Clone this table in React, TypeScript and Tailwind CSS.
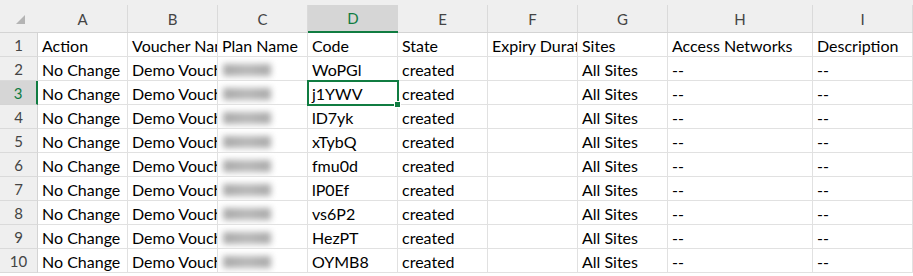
import React from "react";

const cols = [
  { key: "A", w: "w-[90px]" },
  { key: "B", w: "w-[90px]" },
  { key: "C", w: "w-[90px]" },
  { key: "D", w: "w-[90px]" },
  { key: "E", w: "w-[90px]" },
  { key: "F", w: "w-[90px]" },
  { key: "G", w: "w-[90px]" },
  { key: "H", w: "w-[145px]" },
  { key: "I", w: "w-[100px]" },
];

const codes = ["WoPGl", "j1YWV", "lD7yk", "xTybQ", "fmu0d", "lP0Ef", "vs6P2", "HezPT", "OYMB8"];

const header = ["Action", "Voucher Name", "Plan Name", "Code", "State", "Expiry Duration", "Sites", "Access Networks", "Description"];

const rows: string[][] = [
  header,
  ...codes.map((c) => ["No Change", "Demo Voucher", "__blur__", c, "created", "", "All Sites", "--", "--"]),
];

export default function App() {
  return (
    <div className="w-[913px] h-[276px] overflow-hidden bg-white text-[16px] text-black" style={{ fontFamily: "Lato, 'Noto Sans', sans-serif" }}>
      {/* column headers */}
      <div className="flex h-[33px] bg-[#efefef] pt-[5px] border-b border-[#d4d4d4] text-[15px]">
        <div className="w-[38px] shrink-0 flex items-center justify-center">
          <svg width="9" height="9" viewBox="0 0 9 9" className="mt-[1px] ml-[3px]">
            <polygon points="9,0 9,9 0,9" fill="#b4b4b4" />
          </svg>
        </div>
        {cols.map((c) =>
          c.key === "D" ? (
            <div key={c.key} className={`${c.w} shrink-0 flex items-center justify-center pt-[1px] bg-[#d6d6d6] border-b-2 border-[#107c41] text-[#107c41] -mb-px`}>
              {c.key}
            </div>
          ) : (
            <div key={c.key} className={`${c.w} shrink-0 flex items-center justify-center pt-[1px] border-r border-[#dadada] text-[#444]`}>
              {c.key}
            </div>
          )
        )}
      </div>

      {rows.map((r, i) => {
        const n = i + 1;
        const active = n === 3;
        return (
          <div key={n} className="flex h-[24px]">
            <div
              className={
                active
                  ? "w-[38px] shrink-0 flex items-center justify-center pt-[1px] text-[15px] bg-[#d6d6d6] border-r-2 border-[#107c41] border-b border-b-[#d4d4d4] text-[#107c41]"
                  : "w-[38px] shrink-0 flex items-center justify-center pt-[1px] text-[15px] bg-[#efefef] border-r border-[#d4d4d4] border-b border-b-[#dadada] text-[#444]"
              }
            >
              {n}
            </div>
            {r.map((v, j) => {
              const c = cols[j];
              const selected = active && j === 3;
              return (
                <div
                  key={j}
                  className={`${c.w} shrink-0 relative flex items-center pl-[4px] pt-[2px] whitespace-nowrap border-r border-b border-[#e1e1e1] ${selected ? "overflow-visible z-10" : "overflow-hidden"}`}
                >
                  {v === "__blur__" ? (
                    <div className="w-[48px] h-[12px] ml-[1px] bg-gradient-to-r from-[#a8a8a8] via-[#b8b8b8] to-[#a8a8a8] blur-[3px] select-none" aria-hidden="true" />
                  ) : (
                    <span>{v}</span>
                  )}
                  {selected && (
                    <>
                      <div className="absolute -left-px -top-px w-[92px] h-[26px] border-2 border-[#107c41]" />
                      <div className="absolute -right-[4px] -bottom-[4px] w-[7px] h-[7px] bg-[#107c41] border border-white" />
                    </>
                  )}
                </div>
              );
            })}
          </div>
        );
      })}
    </div>
  );
}
